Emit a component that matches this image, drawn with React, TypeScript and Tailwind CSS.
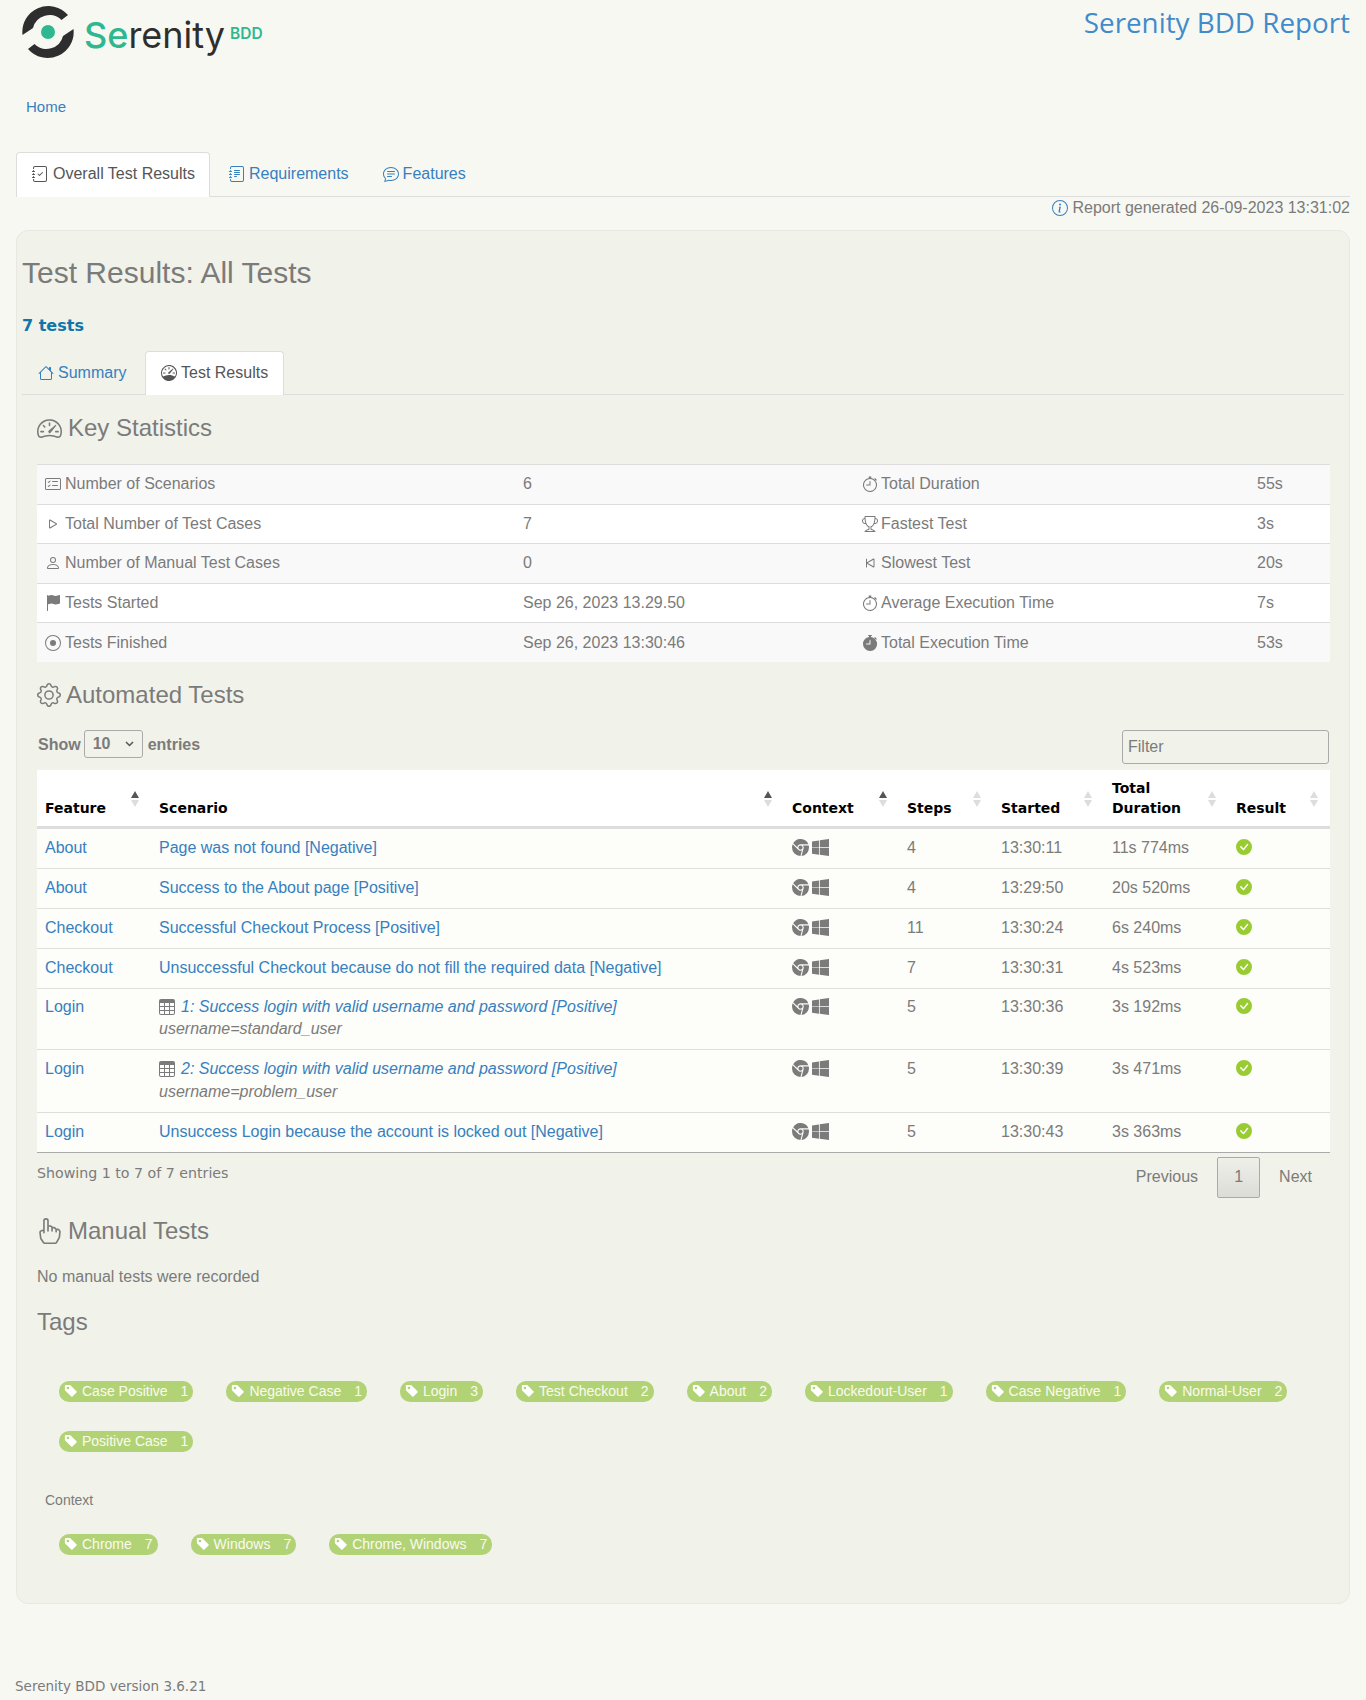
import React from "react";
import { BsHouse, BsSpeedometer2, BsSpeedometer, BsGear, BsTrophy, BsStopwatch, BsStopwatchFill, BsFlagFill, BsRecordCircle, BsPerson, BsPlay, BsSkipStart, BsInfoCircle, BsHandIndex, BsCardChecklist, BsChatText, BsJournalText, BsJournalCheck, BsTable, BsTagFill, BsWindows, BsBrowserChrome, BsCheckCircleFill } from "react-icons/bs";

const link = "text-[#3680bf]";
const sans = "font-['Liberation_Sans',Arial,sans-serif]";

function Logo() {
  return (
    <div className="flex items-start">
      <svg width="54" height="54" viewBox="0 0 54 54" className="mt-[5px] ml-[21px]">
        <circle cx="27" cy="27" r="7" fill="#2fb88f" />
        <path d="M47 10 A26 26 0 0 0 1.5 30 L12 23 A17 17 0 0 1 40.5 15 Z" fill="#2e2e2e" />
        <path d="M7 44 A26 26 0 0 0 52.5 24 L42 31 A17 17 0 0 1 13.5 39 Z" fill="#2e2e2e" />
      </svg>
      <div className="mt-[13px] ml-[9px] flex items-start font-['Inter',sans-serif] leading-none">
        <span className="text-[36px] text-[#2e2e2e] leading-[44px]"><span className="text-[#2fb88f] font-medium">Se</span>renity</span>
        <span className="text-[15.5px] font-semibold text-[#2fb88f] ml-[5px] mt-[13px]">BDD</span>
      </div>
    </div>
  );
}

const stats = [
  [<BsCardChecklist />, "Number of Scenarios", "6", <BsStopwatch />, "Total Duration", "55s"],
  [<BsPlay />, "Total Number of Test Cases", "7", <BsTrophy />, "Fastest Test", "3s"],
  [<BsPerson />, "Number of Manual Test Cases", "0", <BsSkipStart />, "Slowest Test", "20s"],
  [<BsFlagFill />, "Tests Started", "Sep 26, 2023 13.29.50", <BsStopwatch />, "Average Execution Time", "7s"],
  [<BsRecordCircle />, "Tests Finished", "Sep 26, 2023 13:30:46", <BsStopwatchFill />, "Total Execution Time", "53s"],
] as const;

const rows = [
  ["About", "Page was not found [Negative]", "", "", "4", "13:30:11", "11s 774ms"],
  ["About", "Success to the About page [Positive]", "", "", "4", "13:29:50", "20s 520ms"],
  ["Checkout", "Successful Checkout Process [Positive]", "", "", "11", "13:30:24", "6s 240ms"],
  ["Checkout", "Unsuccessful Checkout because do not fill the required data [Negative]", "", "", "7", "13:30:31", "4s 523ms"],
  ["Login", "1: Success login with valid username and password [Positive]", "table", "username=standard_user", "5", "13:30:36", "3s 192ms"],
  ["Login", "2: Success login with valid username and password [Positive]", "table", "username=problem_user", "5", "13:30:39", "3s 471ms"],
  ["Login", "Unsuccess Login because the account is locked out [Negative]", "", "", "5", "13:30:43", "3s 363ms"],
];

const heads: [string, boolean][] = [["Feature", true], ["Scenario", true], ["Context", true], ["Steps", false], ["Started", false], ["Total Duration", false], ["Result", false]];

function Sort({ active }: { active: boolean }) {
  return (
    <span className="absolute right-[12px] bottom-[19px] flex flex-col gap-[2px]">
      <span className={`block w-0 h-0 border-x-[4px] border-x-transparent border-b-[7px] ${active ? "border-b-[#555]" : "border-b-[#ddd]"}`} />
      <span className="block w-0 h-0 border-x-[4px] border-x-transparent border-t-[7px] border-t-[#ddd]" />
    </span>
  );
}

function Tag({ name, n }: { name: string; n: string }) {
  return (
    <span className="inline-flex items-center h-[21px] rounded-[10px] bg-[#b2d276] text-[#fafaf0] text-[14px] pl-[5px] pr-[5px]">
      <BsTagFill className="text-[14px] mr-[4px] text-white" />
      <span>{name}</span>
      <span className="ml-[13px]">{n}</span>
    </span>
  );
}

export default function App() {
  const tags = [["Case Positive", "1"], ["Negative Case", "1"], ["Login", "3"], ["Test Checkout", "2"], ["About", "2"], ["Lockedout-User", "1"], ["Case Negative", "1"], ["Normal-User", "2"], ["Positive Case", "1"]];
  const ctx = [["Chrome", "7"], ["Windows", "7"], ["Chrome, Windows", "7"]];
  return (
    <div className={`${sans} bg-[#f8f8f3] w-[1366px] h-[1700px] text-[16px] text-[#7b7b7b] overflow-hidden`}>
      <header className="flex justify-between h-[152px] relative">
        <div>
          <Logo />
          <div className={`${link} text-[15px] ml-[26px] mt-[37px]`}>Home</div>
        </div>
        <div className="font-['Open_Sans',sans-serif] text-[27.8px] text-[#428bca] mr-[16px] mt-[2px] leading-[40px]">Serenity BDD Report</div>
      </header>

      <nav className="mx-[16px] h-[45px] border-b border-[#ddd] flex">
        <div className="h-[45px] w-[194px] bg-white border border-[#ddd] border-b-0 rounded-t-[4px] flex items-center pl-[15px] pb-[2px] text-[#555]">
          <BsJournalCheck className="mr-[5px] text-[16px]" />Overall Test Results
        </div>
        <div className={`${link} h-[44px] flex items-center pl-[19px]`}><BsJournalText className="mr-[4px]" />Requirements</div>
        <div className={`${link} h-[44px] flex items-center pl-[34px]`}><BsChatText className="mr-[4px]" />Features</div>
      </nav>

      <div className="flex justify-end items-center mr-[16px] h-[21px]">
        <BsInfoCircle className={`${link} mr-[4px]`} />Report generated 26-09-2023 13:31:02
      </div>

      <main className="mx-[16px] mt-[12px] h-[1374px] bg-[#f1f2e9] border border-[#e8e8e2] rounded-[12px] pl-[5px] pr-[5px]">
        <h1 className="text-[30px] leading-[33px] mt-[25px]">Test Results: All Tests</h1>
        <div className="font-['DejaVu_Sans',sans-serif] font-bold text-[16px] text-[#0e76a8] mt-[27px] leading-[20px]">7 tests</div>

        <div className="h-[44px] mt-[15px] border-b border-[#ddd] flex">
          <div className={`${link} h-[43px] flex items-center pl-[16px] w-[123px]`}><BsHouse className="mr-[4px]" />Summary</div>
          <div className="h-[44px] w-[139px] bg-white border border-[#ddd] border-b-0 rounded-t-[4px] flex items-center pl-[15px] pb-[2px] text-[#555]"><BsSpeedometer className="mr-[4px]" />Test Results</div>
        </div>

        <div className="px-[15px]">
          <h2 className="text-[24px] leading-[26px] mt-[20px] flex items-center"><BsSpeedometer2 className="mr-[6px] text-[25px]" />Key Statistics</h2>
          <table className="w-[1293px] mt-[23px] table-fixed border-collapse border-t border-[#ddd]">
            <colgroup><col className="w-[486px]" /><col className="w-[339px]" /><col className="w-[395px]" /><col /></colgroup>
            <tbody>
              {stats.map((s, i) => (
                <tr key={i} className={`h-[39.5px] border-b border-[#ddd] last:border-b-0 ${i % 2 ? "bg-white" : "bg-[#f9f9f9]"}`}>
                  <td className="pl-[8px]"><span className="flex items-center gap-[4px]"><span className="w-[16px] flex justify-center">{s[0]}</span>{s[1]}</span></td>
                  <td>{s[2]}</td>
                  <td className="pl-[0px]"><span className="flex items-center gap-[3px]"><span className="w-[16px] flex justify-center">{s[3]}</span>{s[4]}</span></td>
                  <td>{s[5]}</td>
                </tr>
              ))}
            </tbody>
          </table>

          <h2 className="text-[24px] leading-[26px] mt-[20px] flex items-center"><BsGear className="mr-[5px] text-[24px]" />Automated Tests</h2>

          <div className="flex justify-between mt-[22px] h-[40px]">
            <div className="flex items-start font-bold text-[16px] h-[28px] pl-[1px]">
              <span className="leading-[30px]">Show</span>
              <span className="w-[59px] h-[28px] ml-[3px] mr-[5px] border border-[#aaa] rounded-[3px] flex items-center justify-between px-[8px]">10<svg width="9" height="6" viewBox="0 0 9 6"><path d="M1 1l3.5 3.5L8 1" fill="none" stroke="#555" strokeWidth="1.5"/></svg></span>
              <span className="leading-[30px]">entries</span>
            </div>
            <div className="w-[207px] h-[34px] border border-[#aaa] rounded-[3px] px-[5px] flex items-center">Filter</div>
          </div>

          <table className="w-[1293px] table-fixed border-collapse bg-[#fdfdf9]">
            <colgroup>
              <col className="w-[114px]" /><col className="w-[633px]" /><col className="w-[115px]" /><col className="w-[94px]" /><col className="w-[111px]" /><col className="w-[124px]" /><col className="w-[102px]" />
            </colgroup>
            <thead>
              <tr className="bg-white h-[57px] border-b-[3px] border-[#ddd]">
                {heads.map(([h, a]) => (
                  <th key={h} className="relative text-left align-bottom px-[8px] pb-[8px] font-['DejaVu_Sans',sans-serif] text-[14px] leading-[20px] font-bold text-black">
                    {h}<Sort active={a} />
                  </th>
                ))}
              </tr>
            </thead>
            <tbody>
              {rows.map((r, i) => {
                const top = i === 4 ? "pt-[7px]" : "pt-[8px]";
                const iconTop = i === 4 ? "pt-[9px]" : "pt-[10px]";
                return (
                  <tr key={i} className={`border-b ${i === 6 ? "border-[#aaa]" : "border-[#ddd]"} align-top`}>
                    <td className={`${link} px-[8px] ${top} pb-[9px] leading-[22px]`}>{r[0]}</td>
                    <td className={`px-[8px] ${top} pb-[9px] leading-[22px]`}>
                      <div className={`${link} ${r[2] ? "italic" : ""} flex items-center`}>{r[2] ? <BsTable className="text-[#7b7b7b] mr-[6px] not-italic" /> : null}{r[1]}</div>
                      {r[3] ? <div className={`italic ${i === 5 ? "mt-[1px]" : ""}`}>{r[3]}</div> : null}
                    </td>
                    <td className={`px-[8px] ${iconTop}`}><span className="flex items-center gap-[3px] text-[17px]"><BsBrowserChrome /><BsWindows /></span></td>
                    <td className={`px-[8px] ${top} leading-[22px]`}>{r[4]}</td>
                    <td className={`px-[8px] ${top} leading-[22px]`}>{r[5]}</td>
                    <td className={`px-[8px] ${top} leading-[22px]`}>{r[6]}</td>
                    <td className={`px-[8px] ${iconTop}`}><BsCheckCircleFill className="text-[#99cc33] text-[16px]" /></td>
                  </tr>
                );
              })}
            </tbody>
          </table>

          <div className="flex justify-between w-[1293px]">
            <div className="font-['DejaVu_Sans',sans-serif] text-[14.2px] mt-[11px] leading-[18px]">Showing 1 to 7 of 7 entries</div>
            <div className="flex items-center mt-[4px] h-[41px]">
              <span className="mr-[19px]">Previous</span>
              <span className="w-[43px] h-[41px] border border-[#aaa] rounded-[2px] bg-linear-to-b from-[#f0f0ea] to-[#dcdcd6] flex items-center justify-center">1</span>
              <span className="ml-[19px] mr-[18px]">Next</span>
            </div>
          </div>

          <h2 className="text-[24px] leading-[26px] mt-[20px] flex items-center"><BsHandIndex className="-ml-[2px] mr-[7px] text-[26px]" />Manual Tests</h2>
          <p className="mt-[21px] leading-[24px]">No manual tests were recorded</p>
          <h2 className="text-[24px] leading-[26px] mt-[20px]">Tags</h2>

          <div className="flex flex-wrap gap-x-[33px] gap-y-[29px] pl-[22px] mt-[46px] w-[1293px]">
            {tags.map(([a, b]) => <Tag key={a} name={a} n={b} />)}
          </div>
          <div className="text-[14px] ml-[8px] mt-[38px] leading-[20px]">Context</div>
          <div className="flex gap-x-[33px] pl-[22px] mt-[24px]">
            {ctx.map(([a, b]) => <Tag key={a} name={a} n={b} />)}
          </div>
        </div>
      </main>

      <footer className="font-['DejaVu_Sans',sans-serif] text-[13.5px] ml-[15px] mt-[73px] leading-[18px]">Serenity BDD version 3.6.21</footer>
    </div>
  );
}
